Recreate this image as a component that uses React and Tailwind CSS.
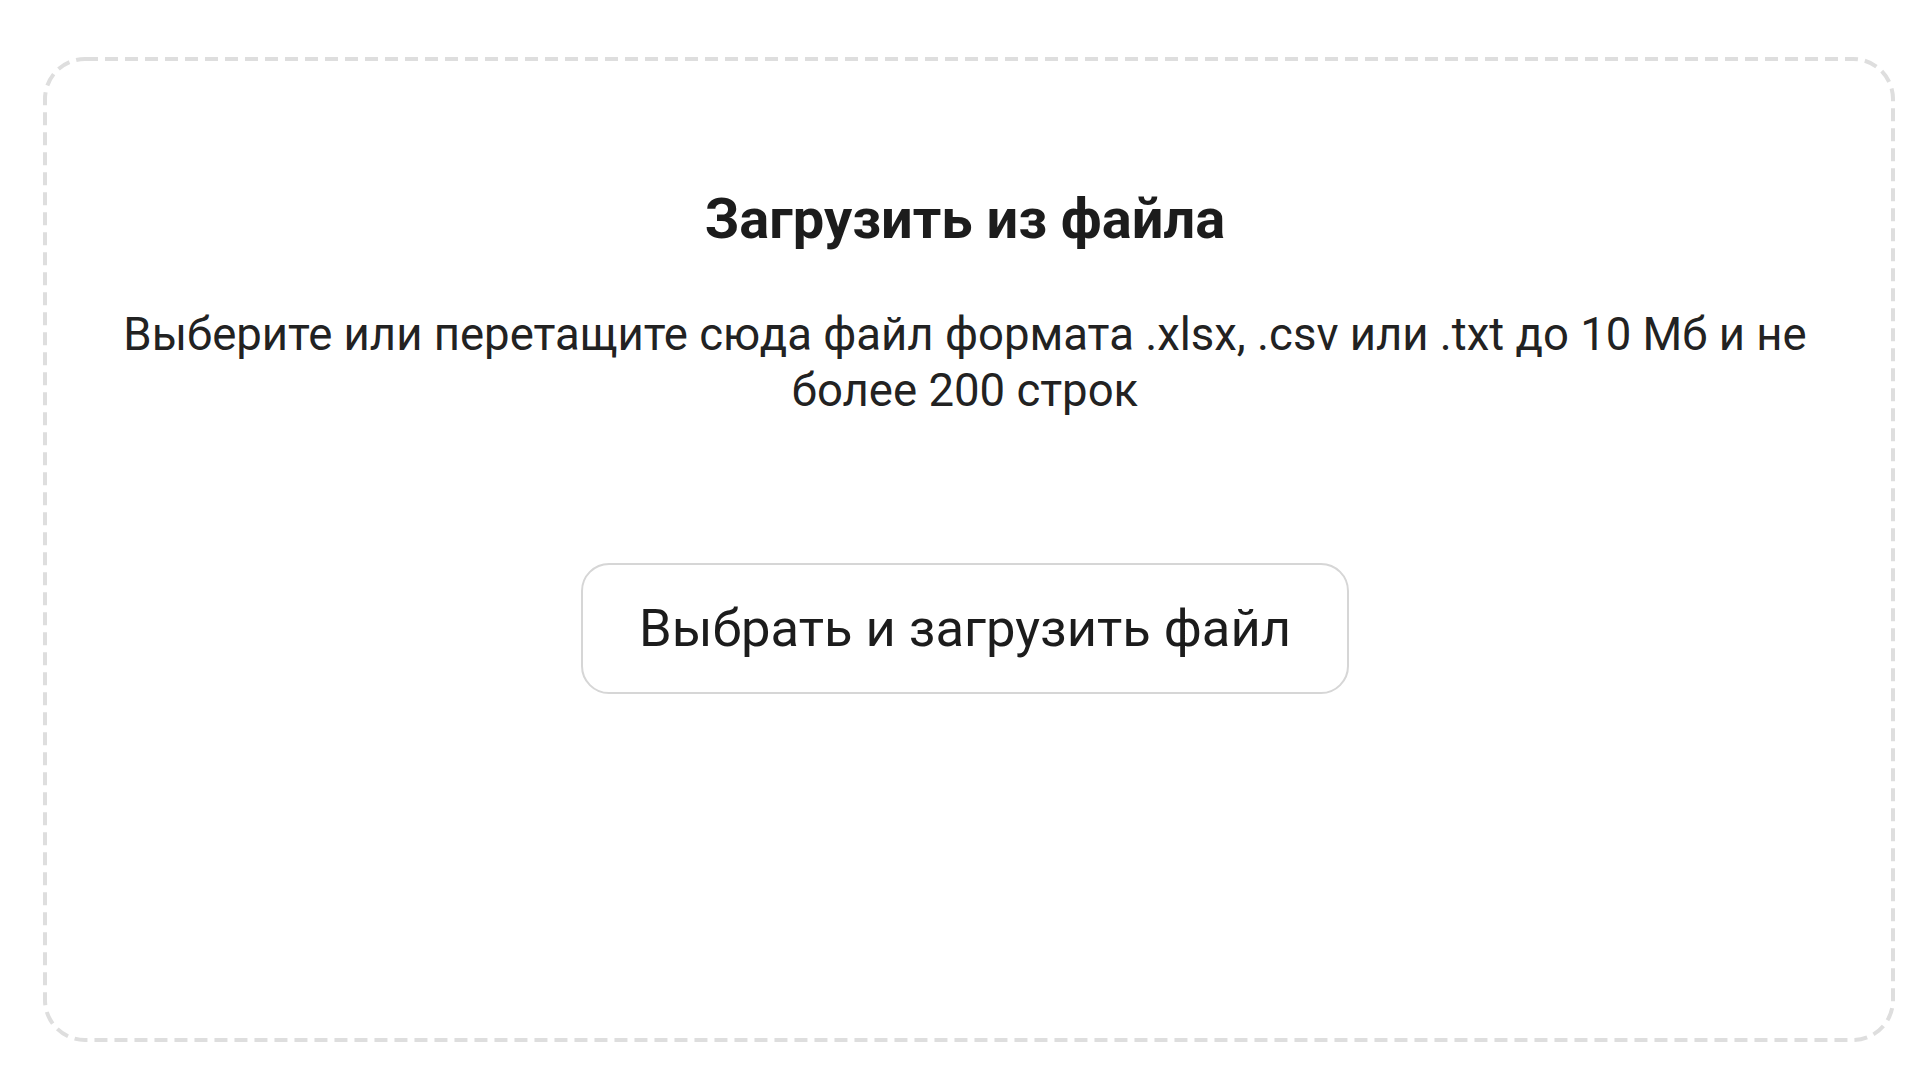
export default function App() {
  return (
    <div className="min-h-screen bg-white pt-[57px] pl-[43px] pr-[36px] font-['Roboto',sans-serif] text-[#1c1c1c]">
      <div className="relative h-[985px] rounded-[42px] flex flex-col items-center pt-[130px] pr-[8px]">
        {/* dashed frame */}
        <svg className="absolute inset-[2px] w-[calc(100%-4px)] h-[calc(100%-4px)] overflow-visible pointer-events-none">
          <rect
            x="0"
            y="0"
            width="100%"
            height="100%"
            rx="40"
            fill="none"
            stroke="#dedede"
            strokeWidth="4"
            strokeDasharray="13 7"
          />
        </svg>
        <h2 className="text-[56px] font-bold leading-[64px]">Загрузить из файла</h2>
        <p className="mt-[56px] px-[56px] text-center text-[45.5px] leading-[56px] text-[#222]">
          Выберите или перетащите сюда файл формата .xlsx, .csv или .txt до 10 Мб и не более 200 строк
        </p>
        <button className="mt-[144px] h-[131px] px-[56px] rounded-[28px] border-2 border-[#d6d6d6] bg-white text-[52.5px] text-[#1c1c1c]">
          Выбрать и загрузить файл
        </button>
      </div>
    </div>
  );
}
